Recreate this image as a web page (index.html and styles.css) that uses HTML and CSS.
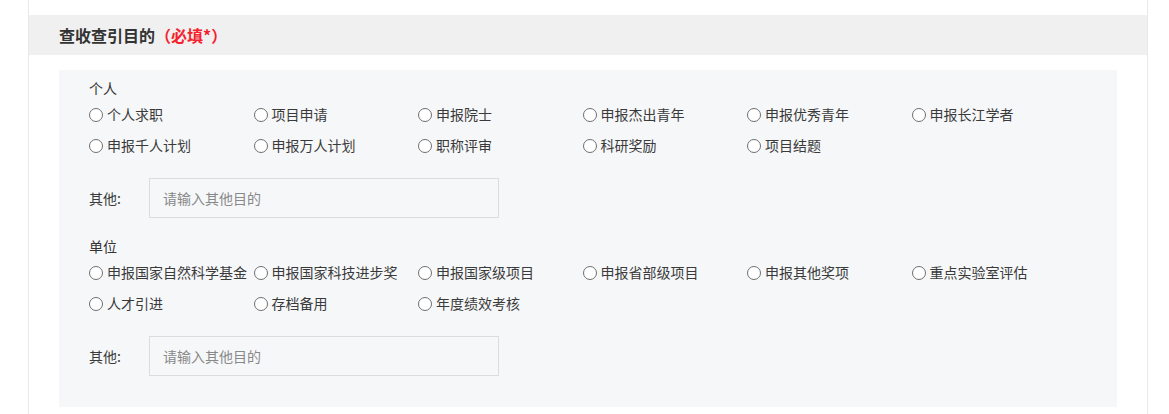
FILE: index.html
```html
<!DOCTYPE html>
<html lang="zh-CN">
<head>
<meta charset="utf-8">
<title>查收查引目的</title>
<link rel="stylesheet" href="styles.css">
</head>
<body>
<div class="card">
  <div class="section-head">
    <h2 class="section-title">查收查引目的<span class="required">（必填*）</span></h2>
  </div>
  <div class="panel">
    <div class="group">
      <div class="group-label">个人</div>
      <div class="options">
        <label class="opt"><input type="radio" name="p"><span>个人求职</span></label>
        <label class="opt"><input type="radio" name="p"><span>项目申请</span></label>
        <label class="opt"><input type="radio" name="p"><span>申报院士</span></label>
        <label class="opt"><input type="radio" name="p"><span>申报杰出青年</span></label>
        <label class="opt"><input type="radio" name="p"><span>申报优秀青年</span></label>
        <label class="opt"><input type="radio" name="p"><span>申报长江学者</span></label>
        <label class="opt"><input type="radio" name="p"><span>申报千人计划</span></label>
        <label class="opt"><input type="radio" name="p"><span>申报万人计划</span></label>
        <label class="opt"><input type="radio" name="p"><span>职称评审</span></label>
        <label class="opt"><input type="radio" name="p"><span>科研奖励</span></label>
        <label class="opt"><input type="radio" name="p"><span>项目结题</span></label>
      </div>
      <div class="other">
        <span class="other-label">其他:</span>
        <input class="other-input" type="text" placeholder="请输入其他目的">
      </div>
    </div>
    <div class="group">
      <div class="group-label">单位</div>
      <div class="options">
        <label class="opt"><input type="radio" name="u"><span>申报国家自然科学基金</span></label>
        <label class="opt"><input type="radio" name="u"><span>申报国家科技进步奖</span></label>
        <label class="opt"><input type="radio" name="u"><span>申报国家级项目</span></label>
        <label class="opt"><input type="radio" name="u"><span>申报省部级项目</span></label>
        <label class="opt"><input type="radio" name="u"><span>申报其他奖项</span></label>
        <label class="opt"><input type="radio" name="u"><span>重点实验室评估</span></label>
        <label class="opt"><input type="radio" name="u"><span>人才引进</span></label>
        <label class="opt"><input type="radio" name="u"><span>存档备用</span></label>
        <label class="opt"><input type="radio" name="u"><span>年度绩效考核</span></label>
      </div>
      <div class="other">
        <span class="other-label">其他:</span>
        <input class="other-input" type="text" placeholder="请输入其他目的">
      </div>
    </div>
  </div>
</div>
</body>
</html>
```

FILE: styles.css
```css
* { box-sizing: border-box; }

html, body {
  margin: 0;
  padding: 0;
  background: #ffffff;
  font-family: "Noto Sans CJK SC", "Noto Sans", sans-serif;
  color: #333333;
  overflow: hidden;
}

.card {
  margin-left: 28px;
  width: 1120px;
  height: 414px;
  padding-top: 15px;
  border-left: 1px solid #e9e9e9;
  border-right: 1px solid #e9e9e9;
  background: #ffffff;
}

.section-head {
  height: 40px;
  background: #f0f0f0;
  padding-left: 30px;
  display: flex;
  align-items: center;
}

.section-title {
  margin: 0;
  font-size: 16px;
  font-weight: 700;
  color: #333333;
  line-height: 20px;
}

.required {
  color: #f5222d;
}

.panel {
  margin: 15px 30px 0 30px;
  background: #f6f7f9;
  padding: 8px 30px 31px 30px;
  display: flex;
  flex-direction: column;
  gap: 18px;
}

.group-label {
  font-size: 14px;
  line-height: 20px;
  color: #333333;
}

.options {
  display: grid;
  grid-template-columns: repeat(6, 164.5px);
  grid-auto-rows: 31px;
}

.opt {
  display: flex;
  align-items: center;
  font-size: 14px;
  color: #3a3a3a;
  white-space: nowrap;
  cursor: pointer;
}

.opt input {
  appearance: none;
  -webkit-appearance: none;
  width: 14px;
  height: 14px;
  margin: 2px 4px 0 0;
  border: 1px solid #6f6f6f;
  border-radius: 50%;
  background: #ffffff;
  flex: none;
}

.other {
  margin-top: 18px;
  display: flex;
  align-items: center;
}

.other-label {
  width: 60px;
  font-size: 14px;
  color: #3a3a3a;
}

.other-input {
  width: 350px;
  height: 40px;
  border: 1px solid #dcdcdc;
  background: #f6f7f9;
  padding: 0 13px;
  font-family: inherit;
  font-size: 14px;
  color: #333333;
  outline: none;
}

.other-input::placeholder {
  color: #888888;
}
```
